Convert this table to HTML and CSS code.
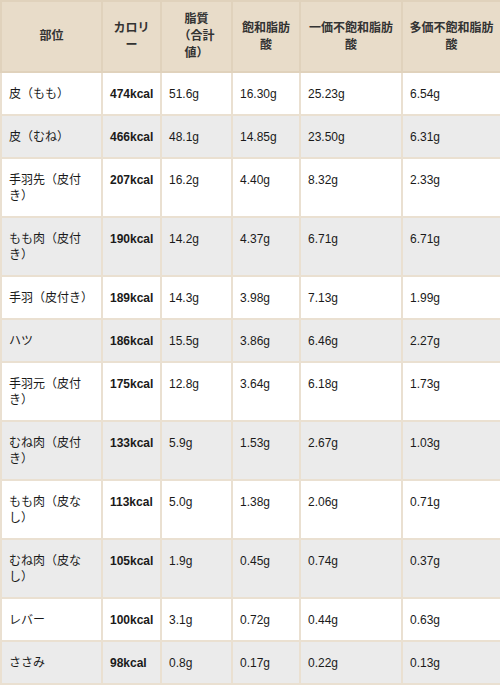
FILE: index.html
```html
<!DOCTYPE html>
<html lang="ja">
<head>
<meta charset="utf-8">
<link rel="stylesheet" href="styles.css">
</head>
<body>
<table class="nutri">
  <colgroup>
    <col class="c1"><col class="c2"><col class="c3"><col class="c4"><col class="c5"><col class="c6">
  </colgroup>
  <thead>
    <tr>
      <th>部位</th>
      <th>カロリー</th>
      <th>脂質<br>（合計<br>値）</th>
      <th>飽和脂肪酸</th>
      <th>一価不飽和脂肪酸</th>
      <th>多価不飽和脂肪酸</th>
    </tr>
  </thead>
  <tbody>
    <tr><td>皮（もも）</td><td class="kcal">474kcal</td><td>51.6g</td><td>16.30g</td><td>25.23g</td><td>6.54g</td></tr>
    <tr><td>皮（むね）</td><td class="kcal">466kcal</td><td>48.1g</td><td>14.85g</td><td>23.50g</td><td>6.31g</td></tr>
    <tr><td>手羽先（皮付き）</td><td class="kcal">207kcal</td><td>16.2g</td><td>4.40g</td><td>8.32g</td><td>2.33g</td></tr>
    <tr><td>もも肉（皮付き）</td><td class="kcal">190kcal</td><td>14.2g</td><td>4.37g</td><td>6.71g</td><td>6.71g</td></tr>
    <tr><td>手羽（皮付き）</td><td class="kcal">189kcal</td><td>14.3g</td><td>3.98g</td><td>7.13g</td><td>1.99g</td></tr>
    <tr><td>ハツ</td><td class="kcal">186kcal</td><td>15.5g</td><td>3.86g</td><td>6.46g</td><td>2.27g</td></tr>
    <tr><td>手羽元（皮付き）</td><td class="kcal">175kcal</td><td>12.8g</td><td>3.64g</td><td>6.18g</td><td>1.73g</td></tr>
    <tr><td>むね肉（皮付き）</td><td class="kcal">133kcal</td><td>5.9g</td><td>1.53g</td><td>2.67g</td><td>1.03g</td></tr>
    <tr><td>もも肉（皮なし）</td><td class="kcal">113kcal</td><td>5.0g</td><td>1.38g</td><td>2.06g</td><td>0.71g</td></tr>
    <tr><td>むね肉（皮なし）</td><td class="kcal">105kcal</td><td>1.9g</td><td>0.45g</td><td>0.74g</td><td>0.37g</td></tr>
    <tr><td>レバー</td><td class="kcal">100kcal</td><td>3.1g</td><td>0.72g</td><td>0.44g</td><td>0.63g</td></tr>
    <tr><td>ささみ</td><td class="kcal">98kcal</td><td>0.8g</td><td>0.17g</td><td>0.22g</td><td>0.13g</td></tr>
  </tbody>
</table>
</body>
</html>
```

FILE: styles.css
```css
html, body {
  margin: 0;
  padding: 0;
  background: #ffffff;
}

.nutri {
  width: 500px;
  table-layout: fixed;
  border-collapse: collapse;
  font-family: "Liberation Sans", "Noto Sans CJK JP", sans-serif;
  font-size: 12px;
  color: #1a1a1a;
}

.c1 { width: 101px; }
.c2 { width: 59px; }
.c3 { width: 71px; }
.c4 { width: 68px; }
.c5 { width: 102px; }
.c6 { width: 99px; }

.nutri th,
.nutri td {
  border: 2px solid #eae0d1;
}

.nutri th {
  background: #e8dcc9;
  font-weight: bold;
  color: #333333;
  line-height: 17px;
  padding: 9px 5px 9px;
  text-align: center;
  vertical-align: middle;
  border-color: #e0d2bc;
}

.nutri td {
  line-height: 16px;
  padding: 13px 7px 12px;
  text-align: left;
  vertical-align: top;
}

.nutri tbody tr:nth-child(even) td {
  background: #ebebeb;
}

.nutri td.kcal {
  font-weight: bold;
}
```
